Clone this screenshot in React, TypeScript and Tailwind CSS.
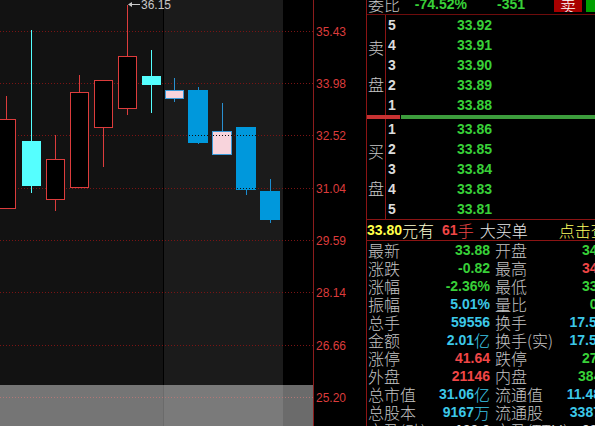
import React from 'react';

const GRID = [
  { y: 31, label: '35.43' },
  { y: 83, label: '33.98' },
  { y: 135, label: '32.52' },
  { y: 188, label: '31.04' },
  { y: 240, label: '29.59' },
  { y: 292, label: '28.14' },
  { y: 345, label: '26.66' },
  { y: 397, label: '25.20' },
];

type Kind = 'up' | 'cyan' | 'pink' | 'blue';
type Candle = { x: number; w: number; top: number; bot: number; hi: number; lo: number; kind: Kind };

const CANDLES: Candle[] = [
  { x: -3, w: 19, top: 119, bot: 209, hi: 96, lo: 209, kind: 'up' },
  { x: 22, w: 19, top: 141, bot: 186, hi: 30, lo: 193, kind: 'cyan' },
  { x: 46, w: 19, top: 159, bot: 200, hi: 135, lo: 211, kind: 'up' },
  { x: 70, w: 19, top: 92, bot: 188, hi: 75, lo: 188, kind: 'up' },
  { x: 94, w: 19, top: 80, bot: 128, hi: 80, lo: 167, kind: 'up' },
  { x: 118, w: 19, top: 56, bot: 109, hi: 5, lo: 115, kind: 'up' },
  { x: 142, w: 19, top: 76, bot: 85, hi: 50, lo: 113, kind: 'cyan' },
  { x: 165, w: 19, top: 90, bot: 99, hi: 78, lo: 102, kind: 'pink' },
  { x: 188, w: 20, top: 90, bot: 143, hi: 87, lo: 144, kind: 'blue' },
  { x: 212, w: 20, top: 131, bot: 155, hi: 103, lo: 155, kind: 'pink' },
  { x: 236, w: 20, top: 127, bot: 190, hi: 127, lo: 195, kind: 'blue' },
  { x: 260, w: 20, top: 191, bot: 220, hi: 179, lo: 223, kind: 'blue' },
];

const STYLE: Record<Kind, { fill: string; stroke: string; wick: string; hollow: boolean }> = {
  up: { fill: '#000000', stroke: '#dc3c3c', wick: '#dc3c3c', hollow: true },
  cyan: { fill: '#55ffff', stroke: '#55ffff', wick: '#55ffff', hollow: false },
  pink: { fill: '#f8d4dc', stroke: '#3a9ad8', wick: '#2a90d0', hollow: true },
  blue: { fill: '#0098dc', stroke: '#0098dc', wick: '#1a8cd0', hollow: false },
};

function Chart() {
  const falling = CANDLES.filter((c) => c.kind === 'pink' || c.kind === 'blue');
  return (
    <div className="w-[366px] h-[426px] shrink-0 bg-black">
      <svg width="366" height="426" shapeRendering="crispEdges">
        <defs>
          <clipPath id="fallBodies">
            {falling.map((c, i) => (
              <rect key={i} x={c.x} y={c.top} width={c.w} height={c.bot - c.top} />
            ))}
          </clipPath>
        </defs>
        <rect x="0" y="0" width="163" height="426" fill="#121212" />
        <rect x="164" y="0" width="119" height="426" fill="#1b1b1b" />
        <line x1="163.5" y1="0" x2="163.5" y2="426" stroke="#000" />

        {GRID.map((g) => (
          <line key={g.y} x1="0" y1={g.y + 0.5} x2="313" y2={g.y + 0.5} stroke="#7a1414" strokeDasharray="1 2" />
        ))}

        {CANDLES.map((c, i) => {
          const s = STYLE[c.kind];
          const cx = c.x + Math.floor(c.w / 2) + 0.5;
          return (
            <g key={i}>
              <line x1={cx} y1={c.hi} x2={cx} y2={c.lo} stroke={s.wick} />
              {s.hollow ? (
                <rect x={c.x + 0.5} y={c.top + 0.5} width={c.w - 1} height={c.bot - c.top - 1} fill={s.fill} stroke={s.stroke} />
              ) : (
                <rect x={c.x} y={c.top} width={c.w} height={c.bot - c.top} fill={s.fill} />
              )}
            </g>
          );
        })}

        <g clipPath="url(#fallBodies)">
          {GRID.map((g) => (
            <line key={g.y} x1="0" y1={g.y + 0.5} x2="313" y2={g.y + 0.5} stroke="#101010" strokeDasharray="1 2" />
          ))}
        </g>

        <line x1="130" y1="4.5" x2="140" y2="4.5" stroke="#c8c8c8" />
        <polygon points="128,4.5 132,2 132,7" fill="#c8c8c8" shapeRendering="auto" />
        <text x="141" y="8.5" fill="#c8c8c8" fontSize="12" fontFamily="'Liberation Sans', sans-serif" shapeRendering="auto">
          36.15
        </text>

        <rect x="0" y="385" width="313" height="41" fill="#ffffff" fillOpacity="0.42" />

        <line x1="313.5" y1="0" x2="313.5" y2="426" stroke="#8b1c1c" />
        {GRID.map((g) => (
          <text key={g.label} x="316" y={g.y + 5} fill="#dc3c3c" fontSize="12" fontFamily="'Liberation Sans', sans-serif">
            {g.label}
          </text>
        ))}
      </svg>
    </div>
  );
}

const NUM = "font-['Liberation_Sans',sans-serif] font-bold text-[14px]";
const CJK = "font-['Noto_Sans_CJK_SC',sans-serif] font-light text-[16px]";

const SELL = [
  { n: '5', p: '33.92' },
  { n: '4', p: '33.91' },
  { n: '3', p: '33.90' },
  { n: '2', p: '33.89' },
  { n: '1', p: '33.88' },
];
const BUY = [
  { n: '1', p: '33.86' },
  { n: '2', p: '33.85' },
  { n: '3', p: '33.84' },
  { n: '4', p: '33.83' },
  { n: '5', p: '33.81' },
];

const G = 'text-[#38d038]';
const R = 'text-[#f04646]';
const C = 'text-[#3cc8e8]';

type Cell = { v: string; u?: string; c: string };
const INFO: { l1: string; v1: Cell; l2: string; v2: Cell }[] = [
  { l1: '最新', v1: { v: '33.88', c: G }, l2: '开盘', v2: { v: '34.50', c: G } },
  { l1: '涨跌', v1: { v: '-0.82', c: G }, l2: '最高', v2: { v: '34.98', c: R } },
  { l1: '涨幅', v1: { v: '-2.36%', c: G }, l2: '最低', v2: { v: '33.65', c: G } },
  { l1: '振幅', v1: { v: '5.01%', c: C }, l2: '量比', v2: { v: '0.83', c: G } },
  { l1: '总手', v1: { v: '59556', c: C }, l2: '换手', v2: { v: '17.58%', c: C } },
  { l1: '金额', v1: { v: '2.01', u: '亿', c: C }, l2: '换手(实)', v2: { v: '17.58%', c: C } },
  { l1: '涨停', v1: { v: '41.64', c: R }, l2: '跌停', v2: { v: '27.76', c: G } },
  { l1: '外盘', v1: { v: '21146', c: R }, l2: '内盘', v2: { v: '38410', c: G } },
  { l1: '总市值', v1: { v: '31.06', u: '亿', c: C }, l2: '流通值', v2: { v: '11.48', u: '亿', c: C } },
  { l1: '总股本', v1: { v: '9167', u: '万', c: C }, l2: '流通股', v2: { v: '3387', u: '万', c: C } },
  { l1: '市盈(动)', v1: { v: '100.0', c: 'text-[#e0e0e0]' }, l2: '市盈(TTM)', v2: { v: '98.62', c: 'text-[#e0e0e0]' } },
];

function Value({ cell }: { cell: Cell }) {
  return (
    <span className={`flex items-center ${cell.c}`}>
      <span className={NUM}>{cell.v}</span>
      {cell.u && <span className={CJK}>{cell.u}</span>}
    </span>
  );
}

function Book({ rows, top, bottom }: { rows: { n: string; p: string }[]; top: string; bottom: string }) {
  return (
    <div className="flex h-[100px]">
      <div className={`w-[19px] shrink-0 border-r border-[#8b1414] flex flex-col items-center justify-center gap-[21px] text-[#c8c8c8] ${CJK} leading-none`}>
        <span>{top}</span>
        <span>{bottom}</span>
      </div>
      <div className="flex-1 flex flex-col">
        {rows.map((r) => (
          <div key={r.n + r.p} className="h-[20px] flex items-center pl-[2px] leading-none">
            <span className={`w-[10px] text-[#dcdcdc] ${NUM}`}>{r.n}</span>
            <span className={`w-[94px] text-right text-[#38d038] ${NUM}`}>{r.p}</span>
          </div>
        ))}
      </div>
    </div>
  );
}

function Panel() {
  return (
    <div className="w-[256px] shrink-0 h-[426px] border-l border-[#8b1414] bg-black text-[#c4c4c4] overflow-hidden">
      <div className="h-[15px] border-b border-[#6e0c0c] flex items-start overflow-hidden leading-none">
        <div className="flex items-center -mt-[5px] h-[18px]">
          <span className={`pl-[1px] ${CJK}`}>委比</span>
          <span className={`w-[67px] text-right text-[#38d038] ${NUM}`}>-74.52%</span>
          <span className={`w-[58px] text-right text-[#38d038] ${NUM}`}>-351</span>
        </div>
        <div className="ml-[29px] w-[28px] h-[12px] bg-[#a80000] flex items-end justify-center overflow-hidden">
          <span className={`text-white ${CJK} leading-none -mb-[1px]`}>卖</span>
        </div>
        <div className="ml-[4px] w-[24px] h-[12px] bg-[#00a000]" />
      </div>

      <Book rows={SELL} top="卖" bottom="盘" />
      <div className="h-[4px] flex">
        <div className="w-[33px] bg-[#c83232]" />
        <div className="ml-[1px] flex-1 bg-[#3c9c3c]" />
      </div>
      <div className="border-b border-[#8b1414]">
        <Book rows={BUY} top="买" bottom="盘" />
      </div>

      <div className="h-[21px] border-b border-[#8b1414] flex items-center leading-none whitespace-nowrap">
        <span className={`text-[#ffff48] ${NUM}`}>33.80</span>
        <span className={`text-[#ffffd0] ${CJK}`}>元有</span>
        <span className={`ml-[8px] text-[#f04646] ${NUM}`}>61</span>
        <span className={`text-[#f04646] ${CJK}`}>手</span>
        <span className={`ml-[6px] text-[#e8e8e8] ${CJK}`}>大买单</span>
        <span className={`ml-[31px] text-[#ffff60] ${CJK}`}>点击查看</span>
      </div>

      <div className="flex flex-col">
        {INFO.map((row) => (
          <div key={row.l1} className="h-[18px] flex items-center pl-[1px] leading-none whitespace-nowrap">
            <div className="w-[122px] flex items-center justify-between">
              <span className={CJK}>{row.l1}</span>
              <Value cell={row.v1} />
            </div>
            <div className="ml-[5px] w-[122px] flex items-center justify-between">
              <span className={CJK}>{row.l2}</span>
              <Value cell={row.v2} />
            </div>
          </div>
        ))}
      </div>
    </div>
  );
}

export default function App() {
  return (
    <div className="w-[595px] h-[426px] overflow-hidden bg-black flex">
      <Chart />
      <Panel />
    </div>
  );
}
